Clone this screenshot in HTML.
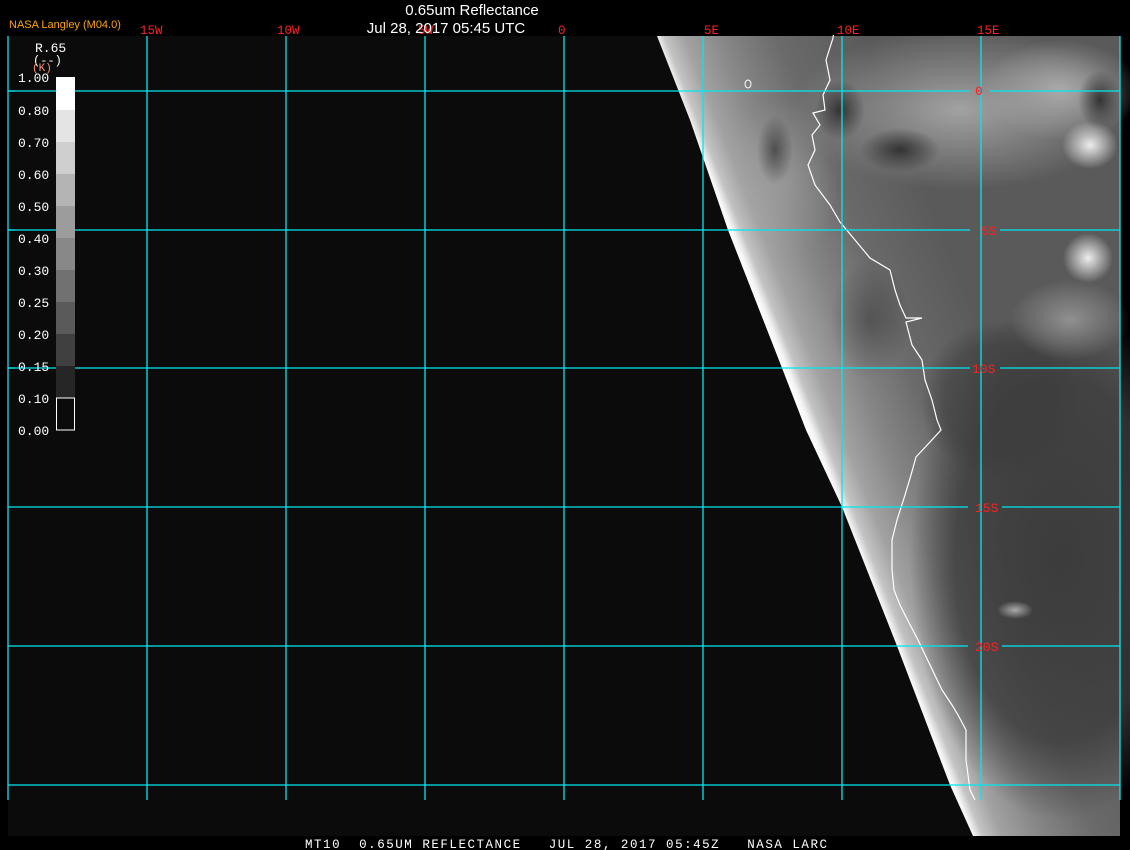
<!DOCTYPE html>
<html><head><meta charset="utf-8"><style>
html,body{margin:0;padding:0;background:#000;width:1130px;height:850px;overflow:hidden}
svg{display:block}
text{font-family:"Liberation Mono",monospace;white-space:pre}
</style></head><body>
<svg width="1130" height="850" viewBox="0 0 1130 850" xmlns="http://www.w3.org/2000/svg">
<defs>
<linearGradient id="lg" gradientUnits="userSpaceOnUse" x1="806" y1="430" x2="992" y2="356">
<stop offset="0" stop-color="#ffffff"/>
<stop offset="0.03" stop-color="#f4f4f4"/>
<stop offset="0.07" stop-color="#c4c4c4"/>
<stop offset="0.16" stop-color="#a2a2a2"/>
<stop offset="0.35" stop-color="#858585"/>
<stop offset="0.6" stop-color="#6a6a6a"/>
<stop offset="1" stop-color="#5a5a5a"/>
</linearGradient>
<radialGradient id="c1"><stop offset="0" stop-color="#eee"/><stop offset="1" stop-color="#eee" stop-opacity="0"/></radialGradient>
<radialGradient id="d1"><stop offset="0" stop-color="#333"/><stop offset="1" stop-color="#333" stop-opacity="0"/></radialGradient>
<radialGradient id="m1"><stop offset="0" stop-color="#aaa"/><stop offset="1" stop-color="#aaa" stop-opacity="0"/></radialGradient>
<radialGradient id="o1"><stop offset="0" stop-color="#3c3c3c"/><stop offset="0.7" stop-color="#3c3c3c" stop-opacity="0.8"/><stop offset="1" stop-color="#3c3c3c" stop-opacity="0"/></radialGradient>
</defs>
<rect x="8" y="36" width="1112" height="800" fill="#0b0b0b"/>
<polygon points="657,36 1120,36 1120,836 973,836 950,785 897,646 842,507 806,430 782,368 728,230 690,120" fill="url(#lg)"/>
<ellipse cx="1060" cy="560" rx="150" ry="260" fill="url(#o1)"/>
<ellipse cx="1000" cy="400" rx="80" ry="80" fill="url(#o1)" opacity="0.7"/>
<ellipse cx="960" cy="110" rx="170" ry="80" fill="url(#m1)" opacity="0.9"/>
<ellipse cx="1060" cy="90" rx="80" ry="50" fill="url(#m1)"/>
<ellipse cx="780" cy="180" rx="60" ry="80" fill="url(#m1)" opacity="0.5"/>
<ellipse cx="1090" cy="145" rx="28" ry="24" fill="url(#c1)"/>
<ellipse cx="1088" cy="258" rx="25" ry="25" fill="url(#c1)"/>
<ellipse cx="1070" cy="320" rx="60" ry="40" fill="url(#m1)" opacity="0.7"/>
<ellipse cx="900" cy="150" rx="40" ry="22" fill="url(#d1)"/>
<ellipse cx="840" cy="110" rx="25" ry="30" fill="url(#d1)"/>
<ellipse cx="1100" cy="100" rx="22" ry="30" fill="url(#d1)"/>
<ellipse cx="775" cy="150" rx="18" ry="35" fill="url(#d1)" opacity="0.7"/>
<ellipse cx="870" cy="320" rx="40" ry="60" fill="url(#d1)" opacity="0.5"/>
<ellipse cx="1015" cy="610" rx="18" ry="9" fill="url(#m1)"/>
<polyline fill="none" stroke="#fff" stroke-width="1.2" points="838,5 833,38 826,60 830,80 823,95 825,110 813,113 820,125 812,135 815,150 808,165 815,185 830,205 840,222 855,240 870,258 890,270 895,290 900,305 906,318 922,318 906,322 912,345 922,360 925,380 932,400 937,420 941,430 930,442 916,457 911,475 905,495 897,520 892,540 892,570 894,590 900,605 905,615 918,640 930,665 942,690 952,705 958,715 966,730 966,760 970,790 975,800"/>
<ellipse cx="748" cy="84" rx="3" ry="4" fill="none" stroke="#fff" stroke-width="1"/>
<g stroke="#00e8f0" stroke-width="1.3">
<line x1="8" y1="36" x2="8" y2="800"/>
<line x1="147" y1="36" x2="147" y2="800"/>
<line x1="286" y1="36" x2="286" y2="800"/>
<line x1="425" y1="36" x2="425" y2="800"/>
<line x1="564" y1="36" x2="564" y2="800"/>
<line x1="703" y1="36" x2="703" y2="800"/>
<line x1="842" y1="36" x2="842" y2="800"/>
<line x1="981" y1="36" x2="981" y2="800"/>
<line x1="1120" y1="36" x2="1120" y2="800"/>
<line x1="8" y1="91" x2="970" y2="91"/><line x1="990" y1="91" x2="1120" y2="91"/>
<line x1="8" y1="230" x2="970" y2="230"/><line x1="1000" y1="230" x2="1120" y2="230"/>
<line x1="8" y1="368" x2="970" y2="368"/><line x1="1000" y1="368" x2="1120" y2="368"/>
<line x1="8" y1="507" x2="968" y2="507"/><line x1="1002" y1="507" x2="1120" y2="507"/>
<line x1="8" y1="646" x2="968" y2="646"/><line x1="1002" y1="646" x2="1120" y2="646"/>
<line x1="8" y1="785" x2="1120" y2="785"/>
</g>
<g fill="#ff2020" font-size="13">
<text x="975" y="95">0</text>
<text x="981" y="235">5S</text>
<text x="972" y="373">10S</text>
<text x="975" y="512">15S</text>
<text x="975" y="651">20S</text>
</g>
<rect x="0" y="0" width="1130" height="35" fill="#000"/>
<g fill="#ff2020" font-size="12.5">
<text x="140" y="34">15W</text>
<text x="277" y="34">10W</text>
<text x="418" y="34">5W</text>
<text x="558" y="34">0</text>
<text x="704" y="34">5E</text>
<text x="837" y="34">10E</text>
<text x="977" y="34">15E</text>
</g>
<text x="472" y="15" fill="#fff" font-size="15" text-anchor="middle" style="font-family:'Liberation Sans',sans-serif">0.65um Reflectance</text>
<text x="446" y="33" fill="#fff" font-size="15" text-anchor="middle" style="font-family:'Liberation Sans',sans-serif">Jul 28, 2017 05:45 UTC</text>
<text x="9" y="28" fill="#ffa500" font-size="11" style="font-family:'Liberation Sans',sans-serif">NASA Langley (M04.0)</text>
<rect x="15" y="36" width="64" height="405" fill="#0b0b0b"/>
<g stroke="#00e8f0" stroke-width="1.3"><line x1="8" y1="91" x2="80" y2="91"/><line x1="8" y1="230" x2="80" y2="230"/><line x1="8" y1="368" x2="80" y2="368"/></g>
<g fill="#fff" font-size="13">
<text x="35" y="52">R.65</text>
<text x="33" y="64" font-size="12">(--)</text>
</g>
<text x="32" y="71" fill="#ff9070" font-size="11">(K)</text>
<g>
<rect x="56" y="77" width="19" height="33" fill="#fff"/>
<rect x="56" y="110" width="19" height="32" fill="#e4e4e4"/>
<rect x="56" y="142" width="19" height="32" fill="#cfcfcf"/>
<rect x="56" y="174" width="19" height="32" fill="#b4b4b4"/>
<rect x="56" y="206" width="19" height="32" fill="#9c9c9c"/>
<rect x="56" y="238" width="19" height="32" fill="#888"/>
<rect x="56" y="270" width="19" height="32" fill="#717171"/>
<rect x="56" y="302" width="19" height="32" fill="#5a5a5a"/>
<rect x="56" y="334" width="19" height="32" fill="#404040"/>
<rect x="56" y="366" width="19" height="32" fill="#262626"/>
<rect x="56.5" y="398" width="18" height="32" fill="#0b0b0b" stroke="#fff" stroke-width="1"/>
</g>
<g fill="#fff" font-size="13">
<text x="18" y="82">1.00</text>
<text x="18" y="115">0.80</text>
<text x="18" y="147">0.70</text>
<text x="18" y="179">0.60</text>
<text x="18" y="211">0.50</text>
<text x="18" y="243">0.40</text>
<text x="18" y="275">0.30</text>
<text x="18" y="307">0.25</text>
<text x="18" y="339">0.20</text>
<text x="18" y="371">0.15</text>
<text x="18" y="403">0.10</text>
<text x="18" y="435">0.00</text>
</g>
<rect x="0" y="836" width="1130" height="14" fill="#000"/>
<text x="305" y="848" fill="#fff" font-size="12.5" textLength="522" lengthAdjust="spacing">MT10  0.65UM REFLECTANCE   JUL 28, 2017 05:45Z   NASA LARC</text>
</svg>
</body></html>
